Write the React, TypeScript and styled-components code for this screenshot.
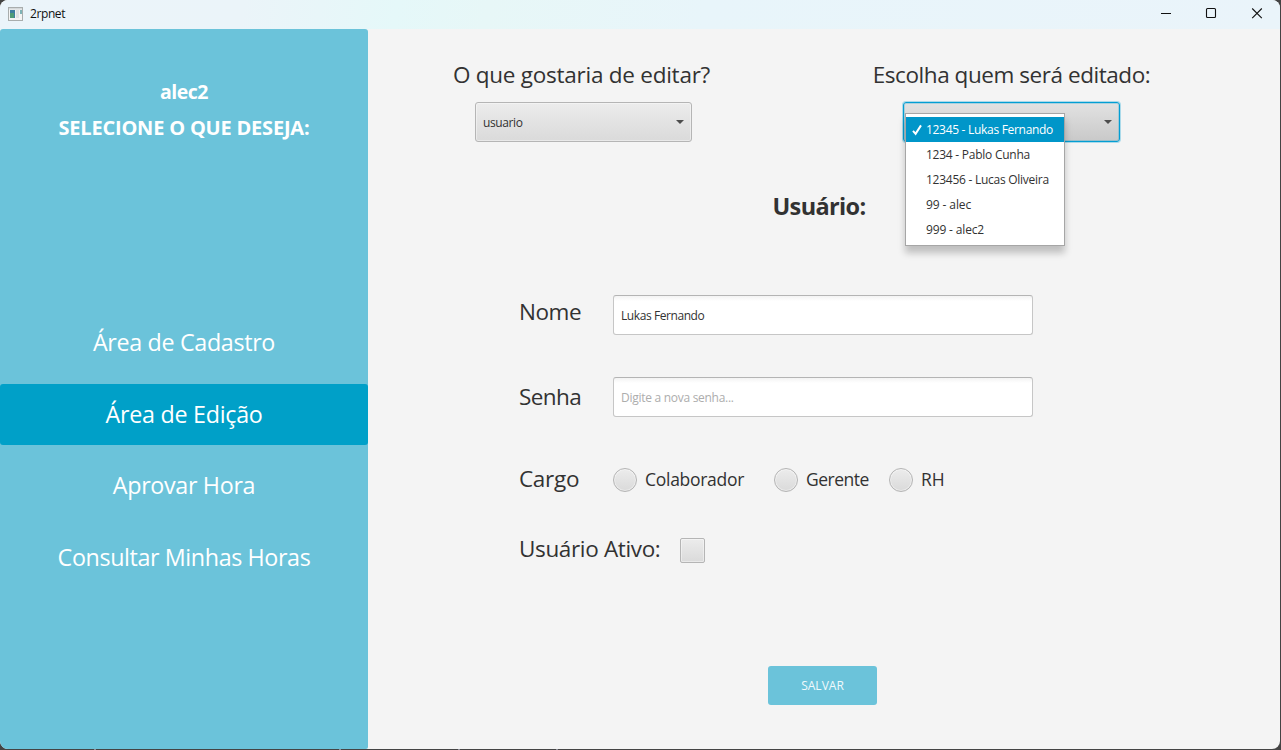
import React from 'react';
import styled, { createGlobalStyle, css } from 'styled-components';

const GlobalStyle = createGlobalStyle`
  * { box-sizing: border-box; }
  body {
    margin: 0;
    background: #444;
    color: #323232;
    font-family: "Open Sans", "Noto Sans", sans-serif;
    font-size: 12px;
    overflow: hidden;
  }
  button, input { font: inherit; color: inherit; }
`;

const Desktop = styled.div`
  width: 1281px;
  height: 750px;
  padding: 0 1px 1px 0;
  background:
    linear-gradient(#8d8d97, #8d8d97) 94px 749px / 2px 1px no-repeat,
    linear-gradient(#8d8d97, #8d8d97) 339px 749px / 2px 1px no-repeat,
    linear-gradient(#8d8d97, #8d8d97) 458px 749px / 2px 1px no-repeat,
    linear-gradient(#8d8d97, #8d8d97) 556px 749px / 2px 1px no-repeat,
    #444;
`;

const Window = styled.div`
  display: flex;
  flex-direction: column;
  height: 749px;
  border-radius: 8px;
  overflow: hidden;
  background: #f4f4f4;
`;

const TitleBar = styled.header`
  display: flex;
  align-items: center;
  flex: none;
  height: 29px;
  padding: 0 17px 2px 8px;
  background: linear-gradient(100deg, #ebf4fa 0%, #ebf4f9 19%, #e5f8f9 31%, #e7f7f7 38%, #e8f5fa 55%, #eaf4fa 100%);
  color: #111;
`;

const AppTitle = styled.span`
  flex: 1;
  margin-left: 7px;
  letter-spacing: -0.4px;
`;

const WindowControls = styled.div`
  display: flex;
  gap: 34px;
  margin-bottom: 2px;
  svg { display: block; }
`;

const Body = styled.div`
  display: flex;
  flex: 1;
`;

const Sidebar = styled.aside`
  display: flex;
  flex-direction: column;
  width: 368px;
  padding-top: 49px;
  border-radius: 3px 3px 2px 0;
  background: #6bc3da;
  color: #fff;
`;

const SidebarHeading = styled.div<{ $track: number; $size: number }>`
  height: 28px;
  margin-bottom: 8px;
  text-align: center;
  font-weight: 700;
  font-size: ${(p) => p.$size}px;
  line-height: 28px;
  letter-spacing: ${(p) => p.$track}px;
`;

const Nav = styled.nav`
  display: flex;
  flex-direction: column;
  gap: 11px;
  margin-top: 162px;
`;

const NavButton = styled.button<{ $active?: boolean; $track: number }>`
  height: 61px;
  padding: 0 0 1px;
  border: 0;
  border-radius: 3px;
  background: ${(p) => (p.$active ? '#00a0c8' : 'transparent')};
  font-size: 23.3px;
  letter-spacing: ${(p) => p.$track}px;
  &:nth-child(3) { margin-top: -1px; }
`;

const Main = styled.main`
  display: flex;
  flex-direction: column;
  flex: 1;
  padding-top: 30px;
`;

const Pickers = styled.section`
  display: flex;
  gap: 211px;
  padding-left: 107px;
`;

const Picker = styled.div`
  display: flex;
  flex-direction: column;
  align-items: center;
  gap: 11px;
  width: 217px;
`;

const Label = styled.label<{ $track?: number; $right?: number }>`
  height: 32px;
  margin-right: ${(p) => p.$right ?? 0}px;
  font-size: 22.5px;
  line-height: 32px;
  letter-spacing: ${(p) => p.$track ?? -0.3}px;
  white-space: nowrap;
`;

const raised = css`
  border: 1px solid #b5b5b5;
  background: linear-gradient(#ececec, #dadada);
  box-shadow: inset 0 0 0 1px rgba(255, 255, 255, 0.4);
`;

const Combo = styled.div<{ $focused?: boolean }>`
  position: relative;
  display: flex;
  align-items: center;
  justify-content: space-between;
  width: 217px;
  height: 40px;
  padding: 0 7px;
  border-radius: 3px;
  letter-spacing: -0.4px;
  ${raised}
  ${(p) =>
    p.$focused &&
    css`
      border-color: #039ed3;
      background: linear-gradient(#e2e2e2, #c9c9c9);
      box-shadow: 0 0 0 1px rgba(3, 158, 211, 0.3), inset 0 0 0 1px rgba(3, 158, 211, 0.25);
    `}
`;

const Arrow = styled.i`
  margin-left: auto;
  border: 4px solid transparent;
  border-top-color: #4d4d4d;
  border-bottom: 0;
`;

const Menu = styled.ul`
  position: absolute;
  z-index: 1;
  top: 10px;
  left: 1px;
  width: 160px;
  height: 133px;
  margin: 0;
  padding: 3px 0;
  border: 1px solid #a6a6a6;
  background: #fff;
  box-shadow: 0 7px 7px rgba(0, 0, 0, 0.22);
  list-style: none;
`;

const MenuItem = styled.li<{ $selected?: boolean; $track: number }>`
  display: flex;
  align-items: center;
  height: 25px;
  background: ${(p) => (p.$selected ? '#0096c9' : 'transparent')};
  color: ${(p) => (p.$selected ? '#fff' : 'inherit')};
  letter-spacing: ${(p) => p.$track}px;
  white-space: nowrap;
`;

const CheckSlot = styled.span`
  display: flex;
  width: 20px;
  padding-left: 6px;
`;

const Title = styled.h1`
  height: 32px;
  margin: 48px 10px 0 0;
  text-align: center;
  font-size: 23.5px;
  font-weight: 700;
  line-height: 32px;
  letter-spacing: -0.65px;
`;

const Form = styled.form`
  display: flex;
  flex-direction: column;
  margin-top: 73px;
  padding-left: 151px;
`;

const FormRow = styled.div<{ $height: number; $gap: number }>`
  display: flex;
  height: ${(p) => p.$height}px;
  margin-bottom: ${(p) => p.$gap}px;
`;

const LabelCell = styled.div<{ $top?: number }>`
  width: 94px;
  padding-top: ${(p) => p.$top ?? 1}px;
`;

const TextField = styled.input`
  width: 420px;
  height: 40px;
  padding: 0 7px 0 7px;
  border: 1px solid #c6c6c6;
  border-top-color: #b4b4b4;
  border-radius: 3px;
  outline: 0;
  background: linear-gradient(#f3f3f3, #fff 5px);
  letter-spacing: -0.42px;
  &::placeholder { color: #adadad; letter-spacing: -0.28px; opacity: 1; }
`;

const Radios = styled.div`
  display: flex;
`;

const Radio = styled.div<{ $width: number; $track: number }>`
  display: flex;
  align-items: center;
  gap: 8px;
  width: ${(p) => p.$width}px;
  font-size: 17.5px;
  letter-spacing: ${(p) => p.$track}px;
`;

const RadioText = styled.span`
  padding-bottom: 2px;
`;

const Dot = styled.i`
  width: 24px;
  height: 24px;
  border-radius: 50%;
  ${raised}
`;

const CheckBox = styled.i`
  width: 25px;
  height: 25px;
  margin: 6px 0 0 20px;
  border-radius: 2px;
  ${raised}
`;

const ActiveLabel = styled(Label)`
  padding-top: 1px;
`;

const SaveButton = styled.button`
  width: 109px;
  height: 39px;
  margin-left: 249px;
  padding: 0;
  border: 0;
  border-radius: 3px;
  background: #6bc3da;
  color: #f0fafc;
`;

const AppIcon = () => (
  <svg width="15" height="14" viewBox="0 0 15 14">
    <rect x="0.5" y="0.5" width="14" height="13" fill="#f4f4f4" stroke="#a9adad" />
    <rect x="1" y="1" width="13" height="1.5" fill="#d4d8da" />
    <rect x="2" y="3" width="5" height="8" fill="#3f7fa0" />
    <rect x="2" y="6" width="4" height="5" fill="#4f9c78" />
    <rect x="8" y="3" width="3" height="8" fill="#dfe2e3" />
    <rect x="12" y="3" width="2" height="4" fill="#7fb3b6" />
  </svg>
);

const people = [
  { text: '12345 - Lukas Fernando', track: -0.3 },
  { text: '1234 - Pablo Cunha', track: -0.25 },
  { text: '123456 - Lucas Oliveira', track: -0.26 },
  { text: '99 - alec', track: -0.1 },
  { text: '999 - alec2', track: -0.15 },
];

export default function App() {
  return (
    <Desktop>
      <GlobalStyle />
      <Window>
        <TitleBar>
          <AppIcon />
          <AppTitle>2rpnet</AppTitle>
          <WindowControls>
            <svg width="12" height="12" viewBox="0 0 12 12"><path d="M2 6.5h10" stroke="#111" /></svg>
            <svg width="12" height="12" viewBox="0 0 12 12"><rect x="1.5" y="1.5" width="9" height="9" rx="1" fill="none" stroke="#111" strokeWidth="1.1" /></svg>
            <svg width="12" height="12" viewBox="0 0 12 12"><path d="M1.2 1.5l9.6 9.6M10.8 1.5l-9.6 9.6" stroke="#111" strokeWidth="1.1" /></svg>
          </WindowControls>
        </TitleBar>
        <Body>
          <Sidebar>
            <SidebarHeading $size={19.5} $track={-0.5}>alec2</SidebarHeading>
            <SidebarHeading $size={20} $track={-0.2}>SELECIONE O QUE DESEJA:</SidebarHeading>
            <Nav>
              <NavButton $track={-0.34}>Área de Cadastro</NavButton>
              <NavButton $active $track={-0.27}>Área de Edição</NavButton>
              <NavButton $track={-0.33}>Aprovar Hora</NavButton>
              <NavButton $track={-0.39}>Consultar Minhas Horas</NavButton>
            </Nav>
          </Sidebar>
          <Main>
            <Pickers>
              <Picker>
                <Label $track={-0.25} $right={4}>O que gostaria de editar?</Label>
                <Combo>usuario<Arrow /></Combo>
              </Picker>
              <Picker>
                <Label $track={-0.44}>Escolha quem será editado:</Label>
                <Combo $focused>
                  <Arrow />
                  <Menu>
                    {people.map((p, i) => (
                      <MenuItem key={p.text} $selected={i === 0} $track={p.track}>
                        <CheckSlot>
                          {i === 0 && (
                            <svg width="10" height="12" viewBox="0 0 10 12">
                              <path d="M1 6.8l2.6 3L9 1.4" fill="none" stroke="#fff" strokeWidth="2" />
                            </svg>
                          )}
                        </CheckSlot>
                        {p.text}
                      </MenuItem>
                    ))}
                  </Menu>
                </Combo>
              </Picker>
            </Pickers>
            <Title>Usuário:</Title>
            <Form>
              <FormRow $height={40} $gap={42}>
                <LabelCell><Label as="div" $track={-0.45}>Nome</Label></LabelCell>
                <TextField defaultValue="Lukas Fernando" />
              </FormRow>
              <FormRow $height={40} $gap={45}>
                <LabelCell $top={4}><Label as="div" $track={-0.6}>Senha</Label></LabelCell>
                <TextField placeholder="Digite a nova senha..." />
              </FormRow>
              <FormRow $height={36} $gap={34}>
                <LabelCell><Label as="div">Cargo</Label></LabelCell>
                <Radios>
                  <Radio $width={161} $track={-0.28}><Dot /><RadioText>Colaborador</RadioText></Radio>
                  <Radio $width={115} $track={-0.5}><Dot /><RadioText>Gerente</RadioText></Radio>
                  <Radio $width={60} $track={0}><Dot /><RadioText>RH</RadioText></Radio>
                </Radios>
              </FormRow>
              <FormRow $height={32} $gap={102}>
                <ActiveLabel $track={-0.35}>Usuário Ativo:</ActiveLabel>
                <CheckBox />
              </FormRow>
              <SaveButton type="button">SALVAR</SaveButton>
            </Form>
          </Main>
        </Body>
      </Window>
    </Desktop>
  );
}
